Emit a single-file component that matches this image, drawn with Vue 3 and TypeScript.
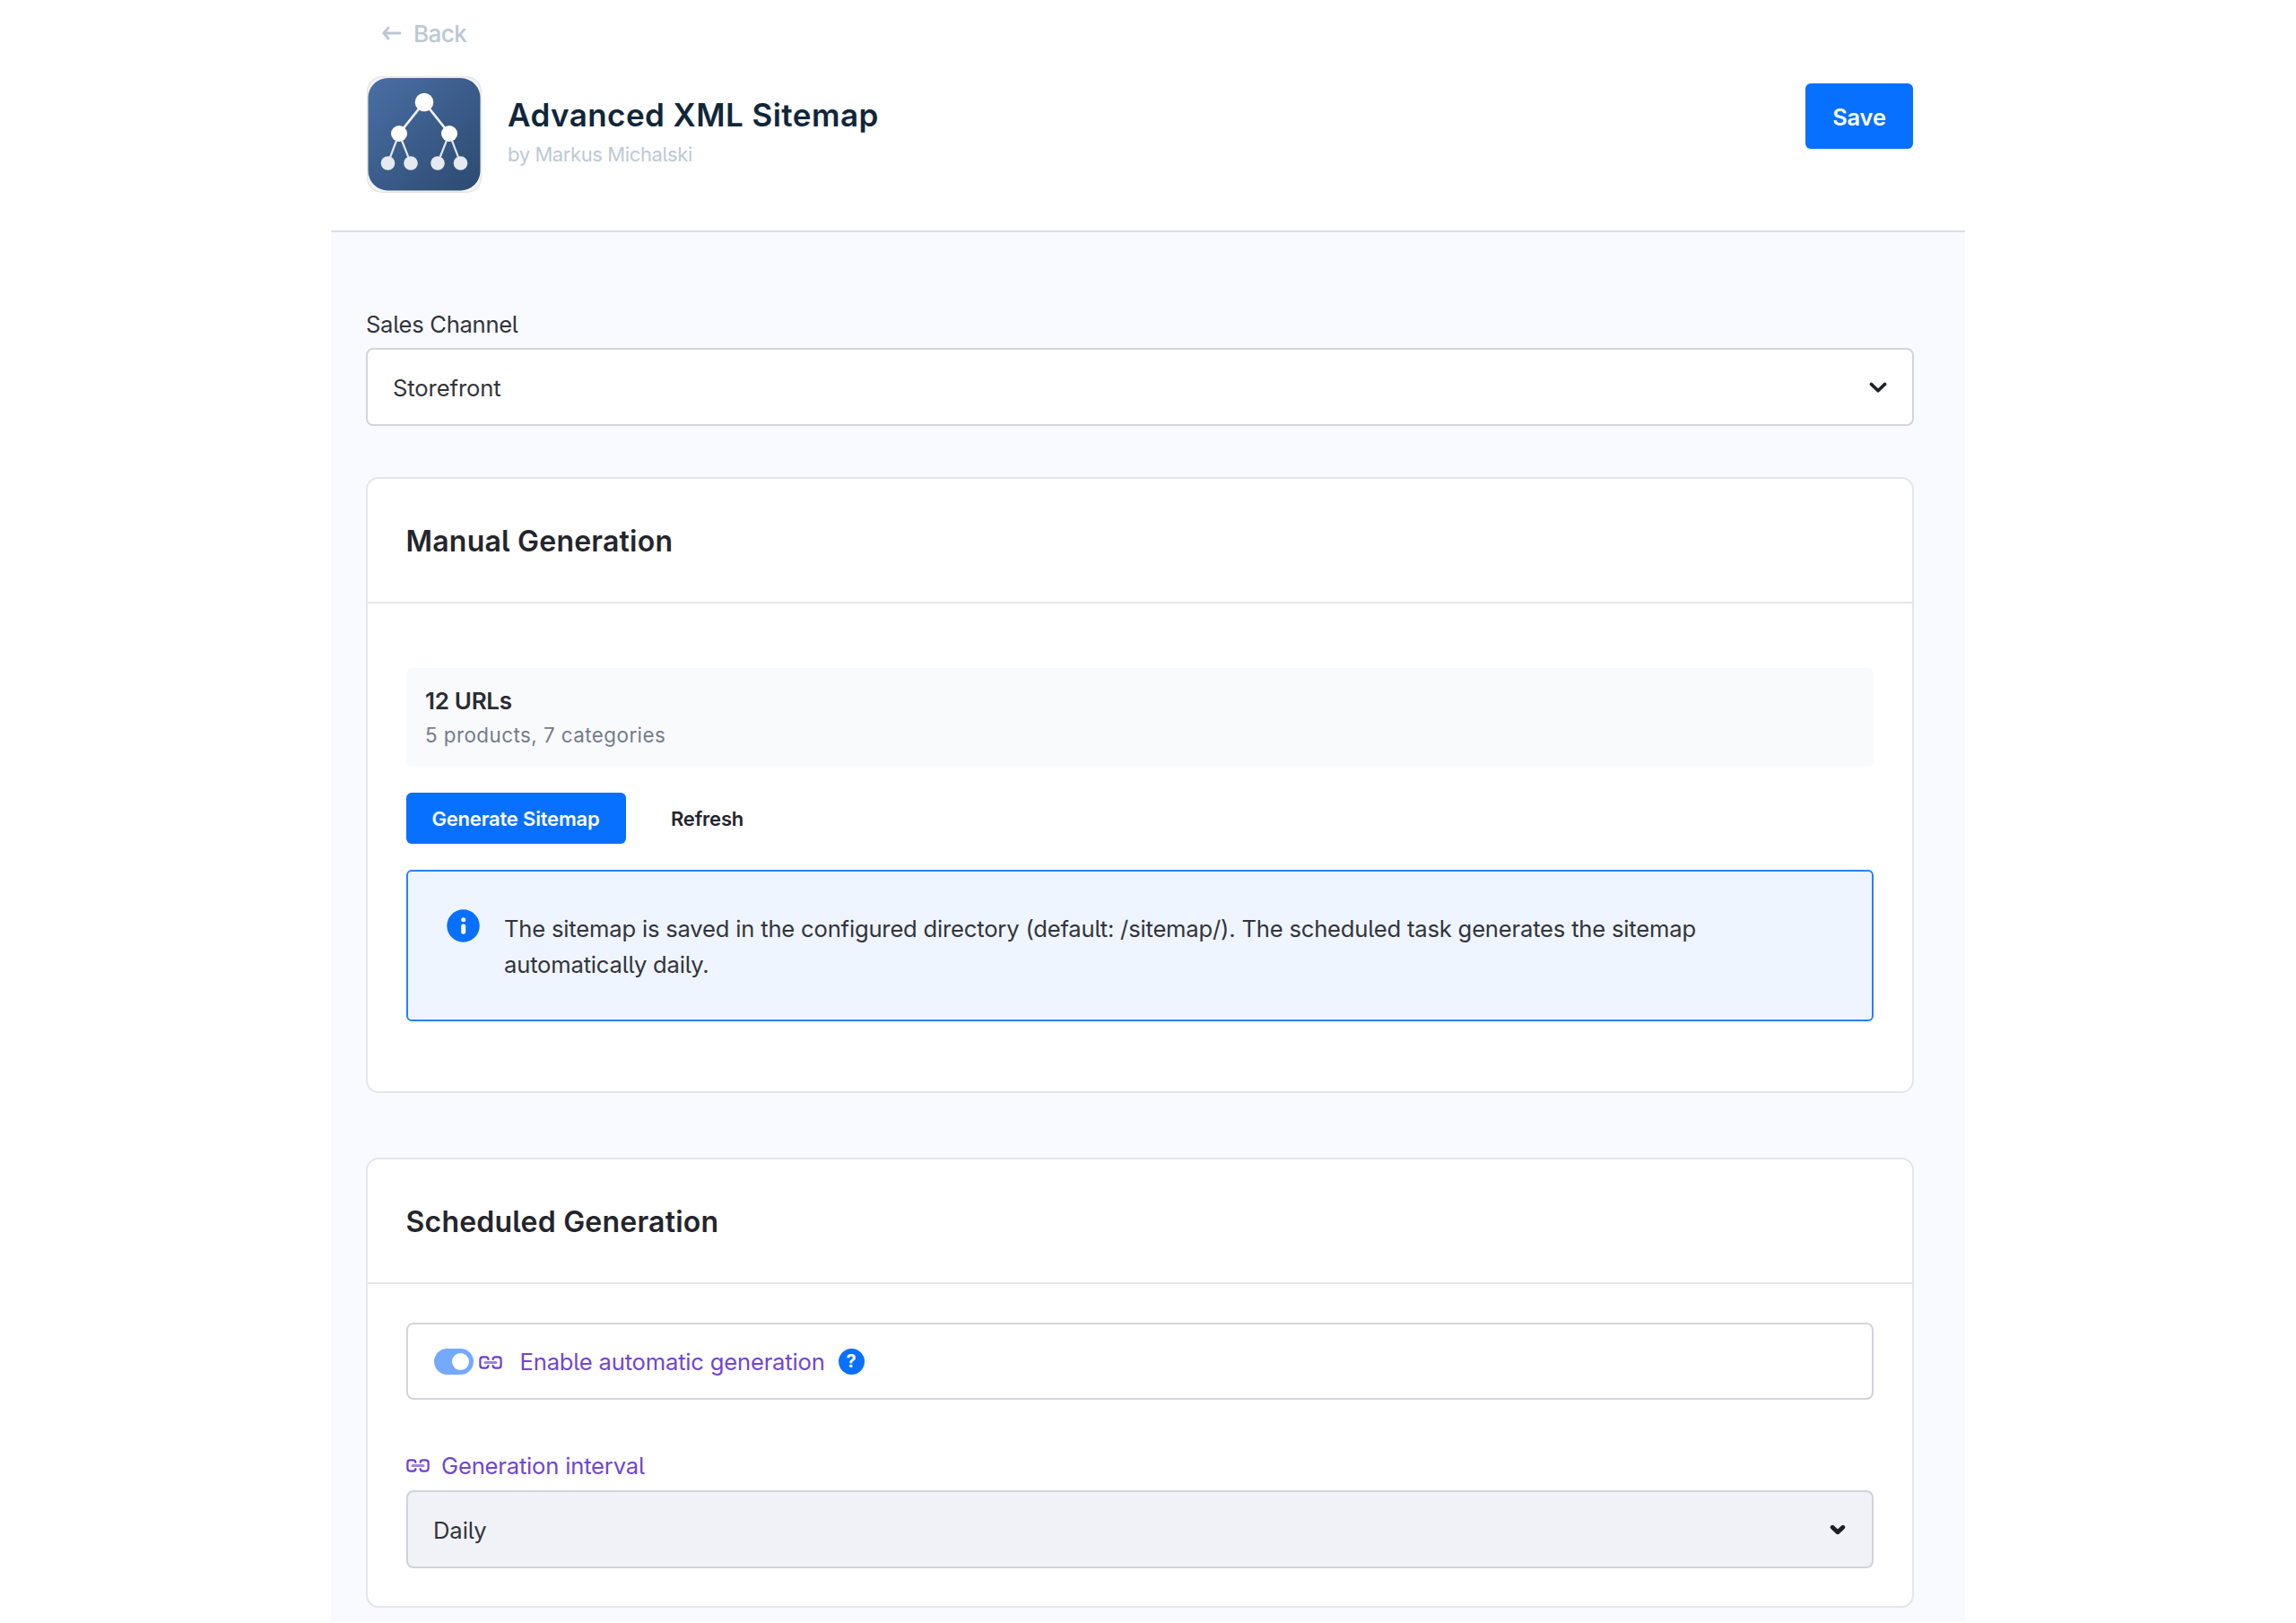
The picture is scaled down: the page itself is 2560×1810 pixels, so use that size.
<script setup lang="ts">
import { ref } from 'vue'

interface TreeNode { x: number; y: number; r: number; leaf?: boolean }

const channel = ref('Storefront')
const interval = ref('Daily')
const enabled = ref(true)

const nodes: TreeNode[] = [
  { x: 64, y: 29, r: 10.3 },
  { x: 36, y: 64, r: 9 },
  { x: 92, y: 64, r: 9 },
  { x: 23.5, y: 97, r: 7.8, leaf: true },
  { x: 49, y: 97, r: 7.8, leaf: true },
  { x: 79, y: 97, r: 7.8, leaf: true },
  { x: 104.5, y: 97, r: 7.8, leaf: true },
]
</script>

<template>
  <div class="page">
    <header class="head">
      <a class="back">
        <svg width="22" height="16" viewBox="0 0 22 16" fill="none" stroke="currentColor" stroke-width="2.8" stroke-linecap="round" stroke-linejoin="round"><path d="M20 8H2M7 2L1.8 8L7 14" /></svg>
        <span>Back</span>
      </a>
      <div class="head-row">
        <svg class="logo" width="128" height="130" viewBox="0 0 128 130">
          <defs>
            <linearGradient id="tile" x1="0" y1="0" x2="1" y2="1">
              <stop offset="0" stop-color="#4a6fa5" />
              <stop offset="1" stop-color="#2c4a70" />
            </linearGradient>
          </defs>
          <rect x="0.75" y="0.75" width="126.5" height="128.5" rx="16" fill="#f4f4f4" stroke="#e6e6e6" stroke-width="1.5" />
          <rect x="1.5" y="2" width="125" height="125.5" rx="22" fill="url(#tile)" />
          <g stroke="#fff" fill="none">
            <path d="M64 29L36 64M64 29L92 64" stroke-width="2.8" stroke-opacity="0.92" />
            <path d="M36 64L23.5 97M36 64L49 97M92 64L79 97M92 64L104.5 97" stroke-width="2.2" stroke-opacity="0.85" />
          </g>
          <circle v-for="(n, i) in nodes" :key="i" :cx="n.x" :cy="n.y" :r="n.r" :fill="n.leaf ? '#e6e9ef' : '#fff'" />
        </svg>
        <div class="titles">
          <h1 class="t-title">Advanced XML Sitemap</h1>
          <p class="t-by">by Markus Michalski</p>
        </div>
        <button class="btn save">Save</button>
      </div>
    </header>

    <main class="content">
      <label class="label">Sales Channel</label>
      <div class="select">
        <span>{{ channel }}</span>
        <svg width="20" height="13" viewBox="0 0 20 13" fill="none" stroke="#22232a" stroke-width="3.6" stroke-linecap="round" stroke-linejoin="round"><path d="M2.4 2.4L10 9.8L17.6 2.4" /></svg>
      </div>

      <section class="card manual">
        <h2 class="card-head">Manual Generation</h2>
        <div class="card-body">
          <div class="stats">
            <strong>12 URLs</strong>
            <small>5 products, 7 categories</small>
          </div>
          <div class="actions">
            <button class="btn gen">Generate Sitemap</button>
            <button class="btn refresh">Refresh</button>
          </div>
          <div class="alert">
            <svg width="37" height="37" viewBox="0 0 37 37"><circle cx="18.5" cy="18.5" r="18.2" fill="#0870ff" /><circle cx="18.7" cy="11.8" r="2.5" fill="#fff" /><rect x="16.2" y="16.4" width="5" height="11.4" rx="2.3" fill="#fff" /></svg>
            <p>The sitemap is saved in the configured directory (default: /sitemap/). The scheduled task generates the sitemap automatically daily.</p>
          </div>
        </div>
      </section>

      <section class="card scheduled">
        <h2 class="card-head">Scheduled Generation</h2>
        <div class="card-body">
          <div class="switch-row">
            <span class="toggle" :class="{ on: enabled }"><i></i></span>
            <svg class="link" width="26" height="15" viewBox="0 0 26 15" fill="none" stroke="currentColor" stroke-width="2.2" stroke-linecap="round"><path d="M10.4 3.8Q10 1.4 7.6 1.4H4.4Q1.4 1.4 1.4 4.4V10.6Q1.4 13.6 4.4 13.6H7.6Q10 13.6 10.4 11.2M15.6 3.8Q16 1.4 18.4 1.4H21.6Q24.6 1.4 24.6 4.4V10.6Q24.6 13.6 21.6 13.6H18.4Q16 13.6 15.6 11.2" /><path d="M7 7.5H19" stroke-width="3" stroke-opacity="0.65" /></svg>
            <span class="purple">Enable automatic generation</span>
            <span class="help">?</span>
          </div>
          <div class="interval-label">
            <svg class="link" width="26" height="15" viewBox="0 0 26 15" fill="none" stroke="currentColor" stroke-width="2.2" stroke-linecap="round"><path d="M10.4 3.8Q10 1.4 7.6 1.4H4.4Q1.4 1.4 1.4 4.4V10.6Q1.4 13.6 4.4 13.6H7.6Q10 13.6 10.4 11.2M15.6 3.8Q16 1.4 18.4 1.4H21.6Q24.6 1.4 24.6 4.4V10.6Q24.6 13.6 21.6 13.6H18.4Q16 13.6 15.6 11.2" /><path d="M7 7.5H19" stroke-width="3" stroke-opacity="0.65" /></svg>
            <span class="purple">Generation interval</span>
          </div>
          <div class="select disabled">
            <span>{{ interval }}</span>
            <svg width="18" height="13" viewBox="0 0 18 13" fill="none" stroke="#1d1f26" stroke-width="4.8" stroke-linecap="round" stroke-linejoin="round"><path d="M3.2 3.2L9 8.8L14.8 3.2" /></svg>
          </div>
        </div>
      </section>
    </main>
  </div>
</template>

<style>
body { background: #fff; }
</style>

<style scoped>
* { box-sizing: border-box; }
.page {
  width: 1822px; height: 1808px; margin-left: 369px; overflow: hidden;
  display: flex; flex-direction: column;
  font-family: Inter, sans-serif; font-feature-settings: "cv05"; font-size: 25.6px; letter-spacing: -0.19px; color: #33343b;
}
h1, h2, p { margin: 0; }
button { border: 0; font: inherit; font-feature-settings: inherit; padding: 0; }
.head { height: 259px; flex: none; border-bottom: 2px solid #d8dfe8; padding: 17px 58px 0 40px; }
.back { display: flex; align-items: center; height: 40px; gap: 13px; padding-left: 17px; color: #bcc7d5; font-size: 26px; font-weight: 500; letter-spacing: -0.5px; }
.head-row { display: flex; align-items: flex-start; margin-top: 28px; }
.logo { flex: none; }
.titles { margin-left: 29px; flex: 1; }
.t-title { font-size: 35px; font-weight: 600; line-height: 44px; margin-top: 21px; letter-spacing: 0.45px; color: #11263a; }
.t-by { font-size: 22px; line-height: 30px; margin-top: 7px; letter-spacing: -0.4px; color: #bec9d6; }
.btn { display: flex; align-items: center; justify-content: center; border-radius: 6px; background: #0870ff; color: #fff; font-weight: 600; }
.save { width: 120px; height: 73px; margin-top: 8px; padding-top: 2px; font-size: 25.4px; letter-spacing: -0.1px; }
.content { flex: 1; background: #f9faff; padding: 82px 57px 0 39px; }
.label { display: block; line-height: 40px; height: 47px; padding-top: 1px; letter-spacing: -0.3px; }
.select { display: flex; align-items: center; justify-content: space-between; height: 87px; border: 2px solid #d3d4dc; border-radius: 8px; background: #fff; padding: 2px 28px 0 28px; letter-spacing: -0.1px; }
.select svg { margin-top: -1px; }
.select.disabled { background: #f0f2f7; border-color: #d1d3da; padding-right: 29px; }
.card { border: 2px solid #e5e6ed; border-radius: 14px; background: #fff; display: flex; flex-direction: column; }
.card-head { height: 139px; flex: none; border-bottom: 2px solid #e5e6ed; padding: 2px 0 0 42.5px; display: flex; align-items: center; font-size: 32px; font-weight: 600; letter-spacing: 0.22px; color: #24252c; }
.card-body { padding: 0 43px; display: flex; flex-direction: column; }
.manual { margin-top: 57px; height: 687px; }
.scheduled { margin-top: 72px; height: 502px; }
.stats { margin-top: 72px; height: 110px; border-radius: 6px; background: #f9fafc; padding: 18px 21px; display: flex; flex-direction: column; }
.stats strong { font-size: 26px; font-weight: 600; line-height: 38px; letter-spacing: -0.3px; color: #2b2c33; }
.stats small { font-size: 22.4px; line-height: 38px; letter-spacing: 0.45px; color: #757c8b; }
.actions { display: flex; margin-top: 29px; gap: 22px; }
.gen, .refresh { height: 57px; font-size: 22px; letter-spacing: -0.18px; padding: 1px 1px 0 0; }
.gen { width: 245px; }
.refresh { width: 138px; background: none; color: #24252c; }
.alert { margin-top: 29px; height: 169px; border: 2px solid #2a80fb; border-radius: 6px; background: #eef5ff; display: flex; align-items: flex-start; padding: 42px 0 0 43px; }
.alert svg { flex: none; }
.alert p { width: 1380px; margin: 2px 0 0 27px; line-height: 40px; }
.switch-row { margin-top: 43px; height: 86px; border: 2px solid #d3d4dc; border-radius: 8px; display: flex; align-items: center; padding-left: 28.5px; }
.toggle { width: 44px; height: 29px; border-radius: 15px; background: #75a8ff; display: flex; align-items: center; padding: 0 5px; }
.toggle.on { justify-content: flex-end; }
.toggle i { width: 19px; height: 19px; border-radius: 50%; background: #fff; }
.link { color: #6d3fcb; flex: none; }
.switch-row .link { margin: 3px 20px 0 6px; }
.purple { color: #7146d0; padding-top: 1px; }
.help { margin-left: 15px; width: 29px; height: 29px; border-radius: 50%; background: #0870ff; color: #fff; font-weight: 700; font-size: 20px; line-height: 29px; text-align: center; }
.interval-label { display: flex; align-items: center; gap: 13px; height: 40px; margin-top: 53px; margin-bottom: 8px; }
</style>
